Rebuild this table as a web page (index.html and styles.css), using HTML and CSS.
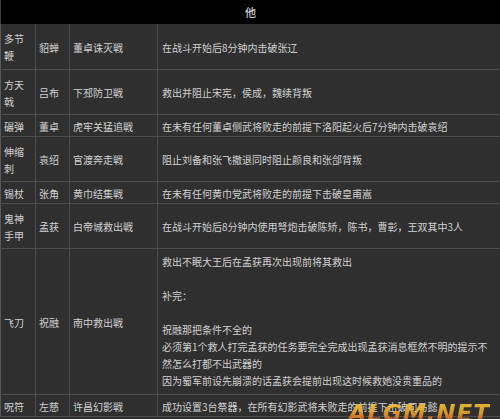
FILE: index.html
```html
<!DOCTYPE html>
<html lang="zh">
<head>
<meta charset="utf-8">
<link rel="stylesheet" href="styles.css">
</head>
<body>
<div class="page">
  <div class="title">他</div>
  <table class="grid">
    <colgroup><col class="c1"><col class="c2"><col class="c3"><col class="c4"></colgroup>
    <tr class="two"><td>多节鞭</td><td>貂蝉</td><td>董卓诛灭戦</td><td>在战斗开始后8分钟内击破张辽</td></tr>
    <tr class="two"><td>方天戟</td><td>吕布</td><td>下邳防卫戦</td><td>救出并阻止宋宪，侯成，魏续背叛</td></tr>
    <tr><td>碾弹</td><td>董卓</td><td>虎牢关猛追戦</td><td>在未有任何董卓侧武将败走的前提下洛阳起火后7分钟内击破袁绍</td></tr>
    <tr class="two"><td>伸缩刺</td><td>袁绍</td><td>官渡奔走戦</td><td>阻止刘备和张飞撤退同时阻止颜良和张郃背叛</td></tr>
    <tr><td>锡杖</td><td>张角</td><td>黄巾结集戦</td><td>在未有任何黄巾党武将败走的前提下击破皇甫嵩</td></tr>
    <tr class="two"><td>鬼神手甲</td><td>孟获</td><td>白帝城救出戦</td><td>在战斗开始后8分钟内使用弩炮击破陈矫，陈书，曹彰，王双其中3人</td></tr>
    <tr><td>飞刀</td><td>祝融</td><td>南中救出戦</td><td class="long">救出不眠大王后在孟获再次出现前将其救出<br><br>补完：<br><br>祝融那把条件不全的<br>必须第1个救人打完孟获的任务要完全完成出现孟获消息框然不明的提示不然怎么打都不出武器的<br>因为蜀军前设先崩溃的话孟获会提前出现这时候救她没贵重品的</td></tr>
    <tr><td>呪符</td><td>左慈</td><td>许昌幻影戦</td><td>成功设置3台祭器，在所有幻影武将未败走的前提下击破司马懿</td></tr>
  </table>
  <div class="wm">ALGM.NET</div>
</div>
</body>
</html>
```
FILE: styles.css
```css
html, body {
  margin: 0;
  padding: 0;
  background: #2f2f2f;
}
.page {
  position: relative;
  width: 500px;
  height: 419px;
  overflow: hidden;
  background: #2f2f2f;
  font-family: "Noto Sans CJK SC", "Noto Sans", sans-serif;
  font-size: 10px;
  color: #d2d2d2;
}
.title {
  height: 24px;
  line-height: 24px;
  background: #000;
  color: #f0f0f0;
  text-align: center;
  font-size: 11px;
  border-left: 1px solid #3a3a3a;
}
.grid {
  width: 500px;
  table-layout: fixed;
  border-collapse: collapse;
  border-left: 1px solid #555;
}
.c1 { width: 35px; }
.c2 { width: 34px; }
.c3 { width: 88px; }
.c4 { width: auto; }
.grid td {
  border: 1px solid #4d4d4d;
  border-top: none;
  padding: 3px 3px 1px;
  line-height: 17px;
  vertical-align: middle;
  word-break: break-all;
}
.grid td:first-child { border-left: 1px solid #5a5a5a; }
.grid td:last-child { padding-left: 4px; border-right: none; }
.grid tr.two { height: 45px; }
.grid td.long { padding-top: 4px; padding-bottom: 5px; }
.wm {
  position: absolute;
  right: 10px;
  bottom: -7px;
  font-family: "DejaVu Sans", sans-serif;
  font-weight: bold;
  font-style: italic;
  font-size: 23px;
  letter-spacing: 1px;
  background: linear-gradient(#f6d23a, #e9a22a 50%, #c8282a);
  -webkit-background-clip: text;
  background-clip: text;
  color: transparent;
  opacity: 0.9;
}
```
